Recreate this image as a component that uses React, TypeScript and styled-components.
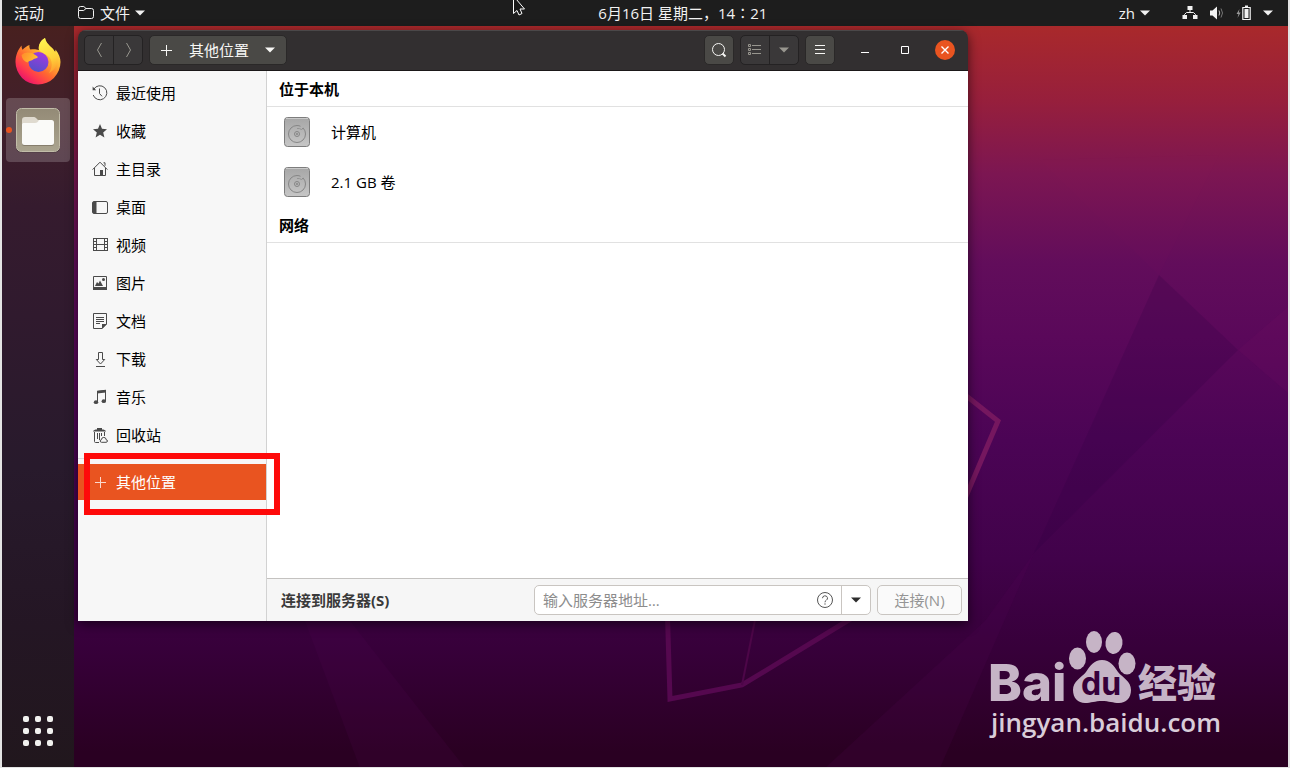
import React from "react";
import styled, { createGlobalStyle, css } from "styled-components";

const GlobalStyle = createGlobalStyle`
  *, *::before, *::after { box-sizing: border-box; }
  body {
    margin: 0;
    font-family: "Open Sans", "Noto Sans CJK SC", sans-serif;
    font-size: 15px;
    line-height: 20px;
  }
  button, input { font: inherit; color: inherit; }
  button { margin: 0; padding: 0; border: 0; background: none; }
  ul { list-style: none; margin: 0; padding: 0; }
  h2 { margin: 0; font-size: 15px; line-height: 20px; }
  svg { display: block; flex: none; }
`;

const Screen = styled.div`
  display: flex;
  flex-direction: column;
  min-height: 100vh;
  border: solid #e4e4e4;
  border-width: 0 2px 1px;
  overflow: hidden;
`;

/* ---------- top bar ---------- */

const TopBar = styled.header`
  display: grid;
  grid-template-columns: 52fr auto 45fr;
  align-items: center;
  height: 26px;
  padding: 0 15px 0 12px;
  background: #1d1d1d;
  color: #f2f2f2;
`;

const BarSide = styled.div<{ $end?: boolean; $gap: number }>`
  display: flex;
  align-items: center;
  justify-content: ${(p) => (p.$end ? "flex-end" : "flex-start")};
  gap: ${(p) => p.$gap}px;
`;

const BarButton = styled.button`
  display: flex;
  align-items: center;
  gap: 5px;
`;

const StatusButton = styled(BarButton)`
  gap: 11px;
`;

const Body = styled.div`
  flex: 1;
  display: flex;
`;

/* ---------- dock ---------- */

const Dock = styled.nav`
  width: 72px;
  display: flex;
  flex-direction: column;
  align-items: center;
  gap: 5px;
  padding: 3px 0 21px;
  background: linear-gradient(#48201f 0, #42202a 80px, #351b2e 180px, #301a2e 290px, #281a2c 440px, #241624 600px, #21171d 100%);
`;

const DockItem = styled.button<{ $active?: boolean }>`
  position: relative;
  display: flex;
  align-items: center;
  justify-content: center;
  width: 64px;
  height: 64px;
  border-radius: 4px;
  background: ${(p) => (p.$active ? "rgba(255, 255, 255, 0.19)" : "none")};
`;

const RunningDot = styled.span`
  position: absolute;
  left: 0;
  top: 29px;
  width: 6px;
  height: 6px;
  border-radius: 50%;
  background: #e95420;
`;

const AppGrid = styled.button`
  margin-top: auto;
  display: grid;
  grid-template-columns: repeat(3, 6px);
  gap: 6px;
  span {
    height: 6px;
    border-radius: 2px;
    background: #f1f1ef;
  }
`;

/* ---------- desktop ---------- */

const Desktop = styled.main`
  position: relative;
  flex: 1;
  min-width: 0;
  background: linear-gradient(
    #a9292b 0,
    #971f3c 10%,
    #7c1652 20%,
    #620d5b 32%,
    #5a085a 42%,
    #4b0455 56%,
    #41024a 72%,
    #37003a 84%,
    #2a0022 98%
  );
`;

const Wallpaper = styled.svg`
  position: absolute;
  inset: 0;
  width: 100%;
  height: 100%;
`;

const Watermark = styled.svg`
  position: absolute;
  right: 60px;
  bottom: 17px;
`;

const Highlight = styled.div`
  position: absolute;
  left: 10px;
  top: 427px;
  width: 196px;
  height: 62px;
  border: 6px solid #fe0a0a;
`;

const Pointer = styled.svg`
  position: absolute;
  left: 511px;
  top: 0;
`;

/* ---------- window ---------- */

const Window = styled.section`
  position: absolute;
  left: 4px;
  top: 4px;
  width: 890px;
  height: 591px;
  display: flex;
  flex-direction: column;
  border-radius: 8px 8px 0 0;
  overflow: hidden;
  box-shadow: 0 3px 12px rgba(0, 0, 0, 0.6);
`;

const HeaderBar = styled.div`
  display: flex;
  align-items: center;
  gap: 6px;
  height: 41px;
  padding: 0 13px 0 6px;
  background: #322f30;
  box-shadow: inset 0 1px #4b4849;
  border-bottom: 1px solid #1b1819;
  color: #f4f4f4;
`;

const ButtonGroup = styled.div`
  display: flex;
  border: 1px solid #242223;
  border-radius: 5px;
  background: #3a3839;
  button + button { border-left: 1px solid #242223; }
`;

const GroupButton = styled.button`
  display: flex;
  align-items: center;
  justify-content: center;
  width: 28px;
  height: 28px;
  color: #98968f;
  & + & { width: 29px; }
`;

const raised = css`
  border: 1px solid #2a2828;
  border-radius: 5px;
  background: #4a4946;
  color: #f7f7f5;
`;

const SquareButton = styled.button`
  ${raised}
  display: flex;
  align-items: center;
  justify-content: center;
  width: 30px;
  height: 30px;
`;

const PathButton = styled.button`
  ${raised}
  display: flex;
  align-items: center;
  gap: 16px;
  height: 30px;
  padding: 0 11px;
  margin-right: auto;
`;

const WindowControls = styled.div`
  display: flex;
  gap: 20px;
  margin-left: 14px;
`;

const ControlButton = styled.button<{ $close?: boolean }>`
  display: flex;
  align-items: center;
  justify-content: center;
  width: 20px;
  height: 20px;
  border-radius: 50%;
  color: #fff;
  background: ${(p) => (p.$close ? "#e95420" : "none")};
`;

const Panes = styled.div`
  flex: 1;
  display: flex;
  min-height: 0;
`;

const Sidebar = styled.nav`
  width: 189px;
  padding-top: 4px;
  background: #f7f7f7;
  border-right: 1px solid #d2d2d2;
`;

const PlaceList = styled.ul`
  display: flex;
  flex-direction: column;
  gap: 2px;
`;

const Divider = styled.hr`
  height: 1px;
  margin: 5px 0;
  border: 0;
  background: #dcdcdc;
`;

const Place = styled.button<{ $selected?: boolean }>`
  display: flex;
  align-items: center;
  gap: 8px;
  width: 100%;
  height: 36px;
  padding: 0 14px;
  color: ${(p) => (p.$selected ? "#fff" : "#000")};
  background: ${(p) => (p.$selected ? "#e95420" : "none")};
  svg { color: ${(p) => (p.$selected ? "#fbd9cd" : "#4a4a4a")}; }
`;

const Content = styled.div`
  flex: 1;
  display: flex;
  flex-direction: column;
  background: #fff;
`;

const Section = styled.section`
  h2 {
    height: 36px;
    padding: 8px 12px;
    border-bottom: 1px solid #e1e1e1;
  }
`;

const Volume = styled.button`
  display: flex;
  align-items: center;
  gap: 18px;
  width: 100%;
  height: 50px;
  padding: 0 14px;
`;

const Footer = styled.form`
  display: flex;
  align-items: center;
  gap: 6px;
  height: 43px;
  margin-top: auto;
  padding: 0 6px 0 14px;
  border-top: 1px solid #c4c2c0;
  background: #f6f6f6;
  color: #3a3a3a;
  label { font-weight: 700; margin-right: auto; }
`;

const AddressBox = styled.div`
  display: flex;
  align-items: center;
  width: 337px;
  height: 30px;
  border: 1px solid #c9c5c1;
  border-radius: 5px;
  background: #fff;
`;

const AddressInput = styled.input`
  flex: 1;
  min-width: 0;
  height: 28px;
  padding: 0 8px;
  border: 0;
  outline: 0;
  background: none;
  &::placeholder { color: #8c8c8c; opacity: 1; }
`;

const HelpButton = styled.button`
  margin-right: 7px;
  color: #555;
`;

const HistoryButton = styled.button`
  display: flex;
  align-items: center;
  justify-content: center;
  width: 29px;
  height: 28px;
  border-left: 1px solid #c9c5c1;
  color: #2d2d2d;
`;

const ConnectButton = styled.button`
  width: 85px;
  height: 30px;
  border: 1px solid #c9c5c1;
  border-radius: 5px;
  background: #fafafa;
  color: #959595;
`;

/* ---------- icons ---------- */

const Arrow = () => (
  <svg width="10" height="6" viewBox="0 0 10 6" aria-hidden="true">
    <path d="M0 .5h10L5 5.5z" fill="currentColor" />
  </svg>
);

const Icon = ({ children, size = 16 }: { children: React.ReactNode; size?: number }) => (
  <svg width={size} height={size} viewBox="0 0 16 16" fill="none" stroke="currentColor" aria-hidden="true">
    {children}
  </svg>
);

const PlusIcon = () => (
  <Icon>
    <path d="M3 8.5h11M8.5 3v11" />
  </Icon>
);

const placeIcons: Record<string, React.ReactNode> = {
  recent: (
    <>
      <path d="M1.8 4.2A7 7 0 1 1 1.2 10" />
      <path d="M.6 1.6v3.6h3.6z" fill="currentColor" stroke="none" />
      <path d="M7.5 3.5v5l2.5 2.8" />
    </>
  ),
  star: (
    <path
      d="M8 1l2 4.8 5 .4-3.8 3.3 1.2 5L8 11.8l-4.400 2.700 1.200-5L1 6.200l5-.4z"
      fill="currentColor"
      stroke="none"
    />
  ),
  home: (
    <>
      <path d="M.6 8.600L8 1.200l7.400 7.400M2.500 7v7.500h11V7M11.500 1.800h1.500v3" />
      <path d="M8 9h3v5.500H8z" fill="currentColor" stroke="none" />
    </>
  ),
  desktop: (
    <>
      <rect x=".5" y="2.500" width="15" height="12" rx="1.500" />
      <path d="M1 3h3.500v11H1z" fill="currentColor" stroke="none" />
    </>
  ),
  video: (
    <>
      <path d="M1.500 1v13M4.500 1v13M12.500 1v13M15.500 1v13M4.500 1.500h8M4.500 7.500h8M4.500 13.500h8" />
      <path d="M3 1v13M14 1v13" strokeWidth="2" strokeDasharray="1 2" />
    </>
  ),
  picture: (
    <>
      <path d="M1.500 1.500h13v12h-13zM1.500 13.500h13" />
      <path d="M1 12h14v3H1zM3 11l2-4 1.500 1.500L8 5.500l3 5.500z" fill="currentColor" stroke="none" />
      <circle cx="11.500" cy="4.500" r="1.500" fill="currentColor" stroke="none" />
    </>
  ),
  document: (
    <>
      <path d="M10 15.500H1.500V.5h13V11zM4 4.500h8M4 6.500h8M4 8.500h8M4 10.500h4" />
      <path d="M10 11h5l-5 5z" fill="currentColor" stroke="none" />
    </>
  ),
  download: <path d="M6.500 1.500h4v7h2.200L8.500 13 4.300 8.500h2.200zM4 15.500h9" />,
  music: (
    <>
      <path d="M5.500 13V2.500l8-1v10.500" />
      <path d="M5 1.800L14 .8v2.700l-9 1z" fill="currentColor" stroke="none" />
      <ellipse cx="4" cy="13.200" rx="2.200" ry="1.900" fill="currentColor" stroke="none" />
      <ellipse cx="11.800" cy="12.200" rx="2.200" ry="1.900" fill="currentColor" stroke="none" />
    </>
  ),
  trash: (
    <>
      <path d="M1 4.500C1.500 3 3 2.500 5 2.500V1h5v1.500c2 0 3.500.5 4 2z" fill="currentColor" stroke="none" />
      <path d="M2.500 5v9.500c0 .6.400 1 1 1H7M12.500 5v4M5.500 6v6M7.500 6v7M9.500 6v3" />
      <path d="M9.500 15.300a1.300 1.300 0 0 1 0-2.600 2.300 2.300 0 1 1 4.600 0 1.300 1.300 0 0 1 0 2.600z" />
    </>
  ),
};

const places = [
  { icon: "recent", name: "最近使用" },
  { icon: "star", name: "收藏" },
  { icon: "home", name: "主目录" },
  { icon: "desktop", name: "桌面" },
  { icon: "video", name: "视频" },
  { icon: "picture", name: "图片" },
  { icon: "document", name: "文档" },
  { icon: "download", name: "下载" },
  { icon: "music", name: "音乐" },
  { icon: "trash", name: "回收站" },
];

const DiskIcon = () => (
  <svg width="32" height="32" viewBox="0 0 32 32" fill="none" aria-hidden="true">
    <defs>
      <linearGradient id="disk" x1="0" y1="0" x2="0" y2="1">
        <stop offset="0" stopColor="#a6a6a6" />
        <stop offset="1" stopColor="#c6c6c6" />
      </linearGradient>
    </defs>
    <rect x="3.500" y="1.500" width="25" height="29" rx="3" fill="url(#disk)" stroke="#7d7d7d" />
    <path d="M5 2.500h22" stroke="#c9c9c9" />
    <path d="M20.500 13.500l1.700-1.400A8.500 8.500 0 0 1 24.500 18a8.500 8.500 0 1 1-8.500-8.500c1.500 0 2.500.3 3.500.8" stroke="#868686" />
    <path d="M20.500 13.500A6 6 0 0 0 16 12.500" stroke="#949494" />
    <circle cx="16" cy="18" r="2.500" stroke="#868686" />
    <circle cx="16" cy="18" r="1" fill="#868686" />
  </svg>
);

const FirefoxIcon = () => (
  <svg width="48" height="48" viewBox="0 0 48 48" aria-hidden="true">
    <defs>
      <linearGradient id="fxBody" x1=".85" y1=".1" x2=".2" y2=".95">
        <stop offset="0" stopColor="#fff44f" />
        <stop offset=".32" stopColor="#ffb131" />
        <stop offset=".58" stopColor="#ff6a2f" />
        <stop offset=".8" stopColor="#ff3750" />
        <stop offset="1" stopColor="#e5126e" />
      </linearGradient>
      <linearGradient id="fxFlame" x1=".5" y1="0" x2=".7" y2="1">
        <stop offset="0" stopColor="#fff44f" />
        <stop offset=".6" stopColor="#ffd23a" />
        <stop offset="1" stopColor="#ff9a2e" />
      </linearGradient>
      <linearGradient id="fxGlobe" x1=".7" y1="0" x2=".3" y2="1">
        <stop offset="0" stopColor="#a238e0" />
        <stop offset="1" stopColor="#5450c8" />
      </linearGradient>
      <linearGradient id="fxFox" x1="0" y1="0" x2="1" y2=".3">
        <stop offset="0" stopColor="#ff8a2a" />
        <stop offset="1" stopColor="#ffbf30" />
      </linearGradient>
    </defs>
    <path
      d="M31 1c1 5 4 7 7 10 2 2 2.500 3 3 4 .5-1 .5-1.500.500-2.500C45 17 46.500 21 46.500 25A22.400 22.400 0 0 1 1.500 25C1.500 18 4 13 7.500 8.500c0 1.500.3 3 1 4.200C10.500 10.500 13 9 15.500 8c-.3 1.500 0 3 .8 4.500C21 12 22 12.500 25 13 24 8 27 3 31 1z"
      fill="url(#fxBody)"
    />
    <path
      d="M31 1c1 5 4 7 7 10 4 5 6 9 5 15-1 5-4 8-8 10 3-5 4-10 1-15-3-4-8-4-11-8-1-5 2-10 6-12z"
      fill="url(#fxFlame)"
    />
    <circle cx="24.500" cy="25" r="10" fill="url(#fxGlobe)" />
    <path
      d="M7.500 18c3-3 7-3 10-2 2 .5 4 2 6.500 4-1 1.500-4 1.500-5.500 3-1.500 1-4 1-5 2.500-3-1-5.500-3.500-6-7.500z"
      fill="url(#fxFox)"
    />
  </svg>
);

const FilesIcon = () => (
  <svg width="46" height="46" viewBox="0 0 46 46" aria-hidden="true">
    <defs>
      <linearGradient id="filesTile" x1="0" y1="0" x2="0" y2="1">
        <stop offset="0" stopColor="#938a76" />
        <stop offset="1" stopColor="#aaa48f" />
      </linearGradient>
    </defs>
    <rect x="1" y="1.500" width="44" height="44" rx="5" fill="#4b3b40" />
    <rect x="1.500" y="1.500" width="43" height="43" rx="5" fill="url(#filesTile)" stroke="#c2bda9" />
    <rect x="7" y="14" width="32" height="25" rx="2.500" fill="#6f6859" opacity=".6" />
    <rect x="7" y="13" width="32" height="25" rx="2.500" fill="#fafaf8" />
    <path d="M7 13c0-2 1-3 3-3h9c1.500 0 2 1 3 2 .5.700 1 1 2 1-1 2-2 3-4 3H9c-1 0-2 .500-2 1.500z" fill="#dfdacf" />
  </svg>
);

const App = () => (
  <>
    <GlobalStyle />
    <Screen>
      <TopBar>
        <BarSide $gap={34}>
          <BarButton>活动</BarButton>
          <BarButton>
            <svg width="17" height="16" viewBox="0 0 17 16" fill="none" stroke="#f2f2f2" aria-hidden="true">
              <path d="M.5 5V3.500a2 2 0 0 1 2-2h3.300L8 3.500h5.500a2 2 0 0 1 2 2v6a2 2 0 0 1-2 2h-11a2 2 0 0 1-2-2V5.500h5.200L8 3.500" />
            </svg>
            文件
            <Arrow />
          </BarButton>
        </BarSide>
        <BarButton>6月16日 星期二，14∶21</BarButton>
        <BarSide $end $gap={32}>
          <BarButton>
            zh
            <Arrow />
          </BarButton>
          <StatusButton aria-label="系统菜单">
            <Icon>
              <path d="M5.500 1h5v4h-5zM.5 10h4.500v4H.5zM11 10h4.500v4H11z" fill="currentColor" stroke="none" />
              <path d="M8 5v3M2.500 10.500v-1l2-2h7l2 2v1" />
            </Icon>
            <Icon>
              <path d="M1 5.500h2.500L8 1.500v13l-4.500-4H1z" fill="currentColor" stroke="none" />
              <path d="M10 5.500q1.500 2.500 0 5" stroke="#bbb" />
              <path d="M12 3.500q3 4.500 0 9" stroke="#777" />
            </Icon>
            <Icon>
              <path d="M3.500 4L.5 9h2l-1 4 3.200-5.500H2.800z" fill="#999" stroke="none" />
              <path d="M6.800 2.500h7.400v12H6.800z" strokeWidth="1.200" />
              <path d="M9 .500h3v2H9zM8.500 4h4v9h-4z" fill="currentColor" stroke="none" />
            </Icon>
            <Arrow />
          </StatusButton>
        </BarSide>
        <Pointer width="16" height="17" viewBox="0 0 16 17" aria-hidden="true">
          <path d="M2.500-4v17.500L6 10.500 8 15l3-1.500-2-4.500h4.500z" fill="#1a1a1a" stroke="#fff" />
        </Pointer>
      </TopBar>

      <Body>
        <Dock aria-label="Dock">
          <DockItem aria-label="Firefox">
            <FirefoxIcon />
          </DockItem>
          <DockItem $active aria-label="文件">
            <RunningDot />
            <FilesIcon />
          </DockItem>
          <AppGrid aria-label="显示应用程序">
            {Array.from({ length: 9 }, (_, i) => (
              <span key={i} />
            ))}
          </AppGrid>
        </Dock>

        <Desktop>
          <Wallpaper viewBox="74 26 1214 741" preserveAspectRatio="xMidYMid slice" aria-hidden="true">
            <path d="M1159 275L1238 350 1034 553z" fill="#2e0040" opacity=".2" />
            <path d="M1288 307v86l-50-43z" fill="#8a1070" opacity=".1" />
            <path d="M1040 160L1159 275l60-120z" fill="#9a1c68" opacity=".04" />
            <path d="M1034 553L985 621 825 768h115z" fill="#5a0a5a" opacity=".14" />
            <path d="M305 621h45l115 147H360z" fill="#5a0a5a" opacity=".15" />
            <g fill="none">
              <path d="M667 600l3 99 72-14 115-70" stroke="#55084f" strokeWidth="5" />
              <path d="M742 685l14-70" stroke="#4d0648" strokeWidth="2" />
              <path d="M950 383l48 38-34 80" stroke="#75175f" strokeWidth="5" />
            </g>
          </Wallpaper>

          <Window aria-label="文件">
            <HeaderBar>
              <ButtonGroup>
                <GroupButton aria-label="后退">
                  <Icon>
                    <path d="M10.500 1L6.500 8l4 7" />
                  </Icon>
                </GroupButton>
                <GroupButton aria-label="前进">
                  <Icon>
                    <path d="M6.500 1l4 7-4 7" />
                  </Icon>
                </GroupButton>
              </ButtonGroup>
              <PathButton>
                <svg width="12" height="12" viewBox="0 0 12 12" stroke="currentColor" aria-hidden="true">
                  <path d="M0 6.500h11M5.500 1v11" />
                </svg>
                其他位置
                <Arrow />
              </PathButton>
              <SquareButton aria-label="搜索">
                <Icon>
                  <circle cx="7.500" cy="7.500" r="6" />
                  <path d="M11.500 11.500l3 3" strokeWidth="2" />
                </Icon>
              </SquareButton>
              <ButtonGroup>
                <GroupButton aria-label="列表视图">
                  <Icon>
                    <path d="M1.500 2.500h2v2h-2zM1.500 6.500h2v2h-2zM1.500 10.500h2v2h-2zM5 3.500h9M5 7.500h9M5 11.500h9" />
                  </Icon>
                </GroupButton>
                <GroupButton aria-label="视图选项">
                  <Arrow />
                </GroupButton>
              </ButtonGroup>
              <SquareButton aria-label="菜单">
                <Icon>
                  <path d="M3 3.500h10M3 7.500h10M3 11.500h10" />
                </Icon>
              </SquareButton>
              <WindowControls>
                <ControlButton aria-label="最小化">
                  <Icon>
                    <path d="M4 10.500h8" />
                  </Icon>
                </ControlButton>
                <ControlButton aria-label="最大化">
                  <Icon>
                    <path d="M4.500 4.500h7v7h-7z" />
                  </Icon>
                </ControlButton>
                <ControlButton $close aria-label="关闭">
                  <Icon>
                    <path d="M4.500 4.500l7 7M11.500 4.500l-7 7" strokeWidth="1.400" />
                  </Icon>
                </ControlButton>
              </WindowControls>
            </HeaderBar>

            <Panes>
              <Sidebar aria-label="位置">
                <PlaceList>
                  {places.map((place) => (
                    <li key={place.icon}>
                      <Place>
                        <Icon>{placeIcons[place.icon]}</Icon>
                        {place.name}
                      </Place>
                    </li>
                  ))}
                </PlaceList>
                <Divider />
                <Place $selected>
                  <PlusIcon />
                  其他位置
                </Place>
              </Sidebar>

              <Content>
                <Section>
                  <h2>位于本机</h2>
                  <Volume>
                    <DiskIcon />
                    计算机
                  </Volume>
                  <Volume>
                    <DiskIcon />
                    2.1 GB 卷
                  </Volume>
                </Section>
                <Section>
                  <h2>网络</h2>
                </Section>
                <Footer onSubmit={(e) => e.preventDefault()}>
                  <label htmlFor="server-address">连接到服务器(S)</label>
                  <AddressBox>
                    <AddressInput id="server-address" placeholder="输入服务器地址…" />
                    <HelpButton type="button" aria-label="帮助">
                      <svg width="18" height="18" viewBox="0 0 18 18" fill="none" stroke="currentColor" aria-hidden="true">
                        <circle cx="9" cy="9" r="7.500" />
                        <path d="M6.500 7.200a2.500 2.400 0 1 1 3.700 2.100q-1.200.7-1.200 2" />
                        <path d="M9 12.300v1.400" />
                      </svg>
                    </HelpButton>
                    <HistoryButton type="button" aria-label="最近的服务器">
                      <Arrow />
                    </HistoryButton>
                  </AddressBox>
                  <ConnectButton disabled>连接(N)</ConnectButton>
                </Footer>
              </Content>
            </Panes>
          </Window>

          <Highlight />

          <Watermark width="240" height="122" viewBox="988 628 240 122" role="img" aria-label="Baidu 经验">
            <g fill="#c6b4c6">
              <text x="988" y="701" fontFamily="Inter, sans-serif" fontWeight="800" fontSize="51">
                Bai
              </text>
              <ellipse cx="1077.500" cy="658.500" rx="8.500" ry="11" />
              <ellipse cx="1094" cy="642" rx="8" ry="11" />
              <ellipse cx="1114" cy="643" rx="8.500" ry="11" transform="rotate(8 1114 643)" />
              <ellipse cx="1127" cy="663.500" rx="8.500" ry="11" />
              <path d="M1102 660c8 0 12 6 16 12 5 6 13 9 13 18 0 8-5 13-12 13-6 0-10-2-17-2s-11 2-17 2c-7 0-12-5-12-13 0-9 8-12 13-18 4-6 8-12 16-12z" />
              <text x="1138" y="697" fontFamily="'Noto Sans CJK SC', sans-serif" fontWeight="900" fontSize="39">
                经验
              </text>
            </g>
            <text x="1081" y="695" fontFamily="Inter, sans-serif" fontWeight="700" fontSize="32" fill="#36003a">
              du
            </text>
            <text x="991" y="732" fontFamily="'Open Sans', sans-serif" fontWeight="600" fontSize="26" fill="#d9cdd9">
              jingyan.baidu.com
            </text>
          </Watermark>
        </Desktop>
      </Body>
    </Screen>
  </>
);

export default App;
